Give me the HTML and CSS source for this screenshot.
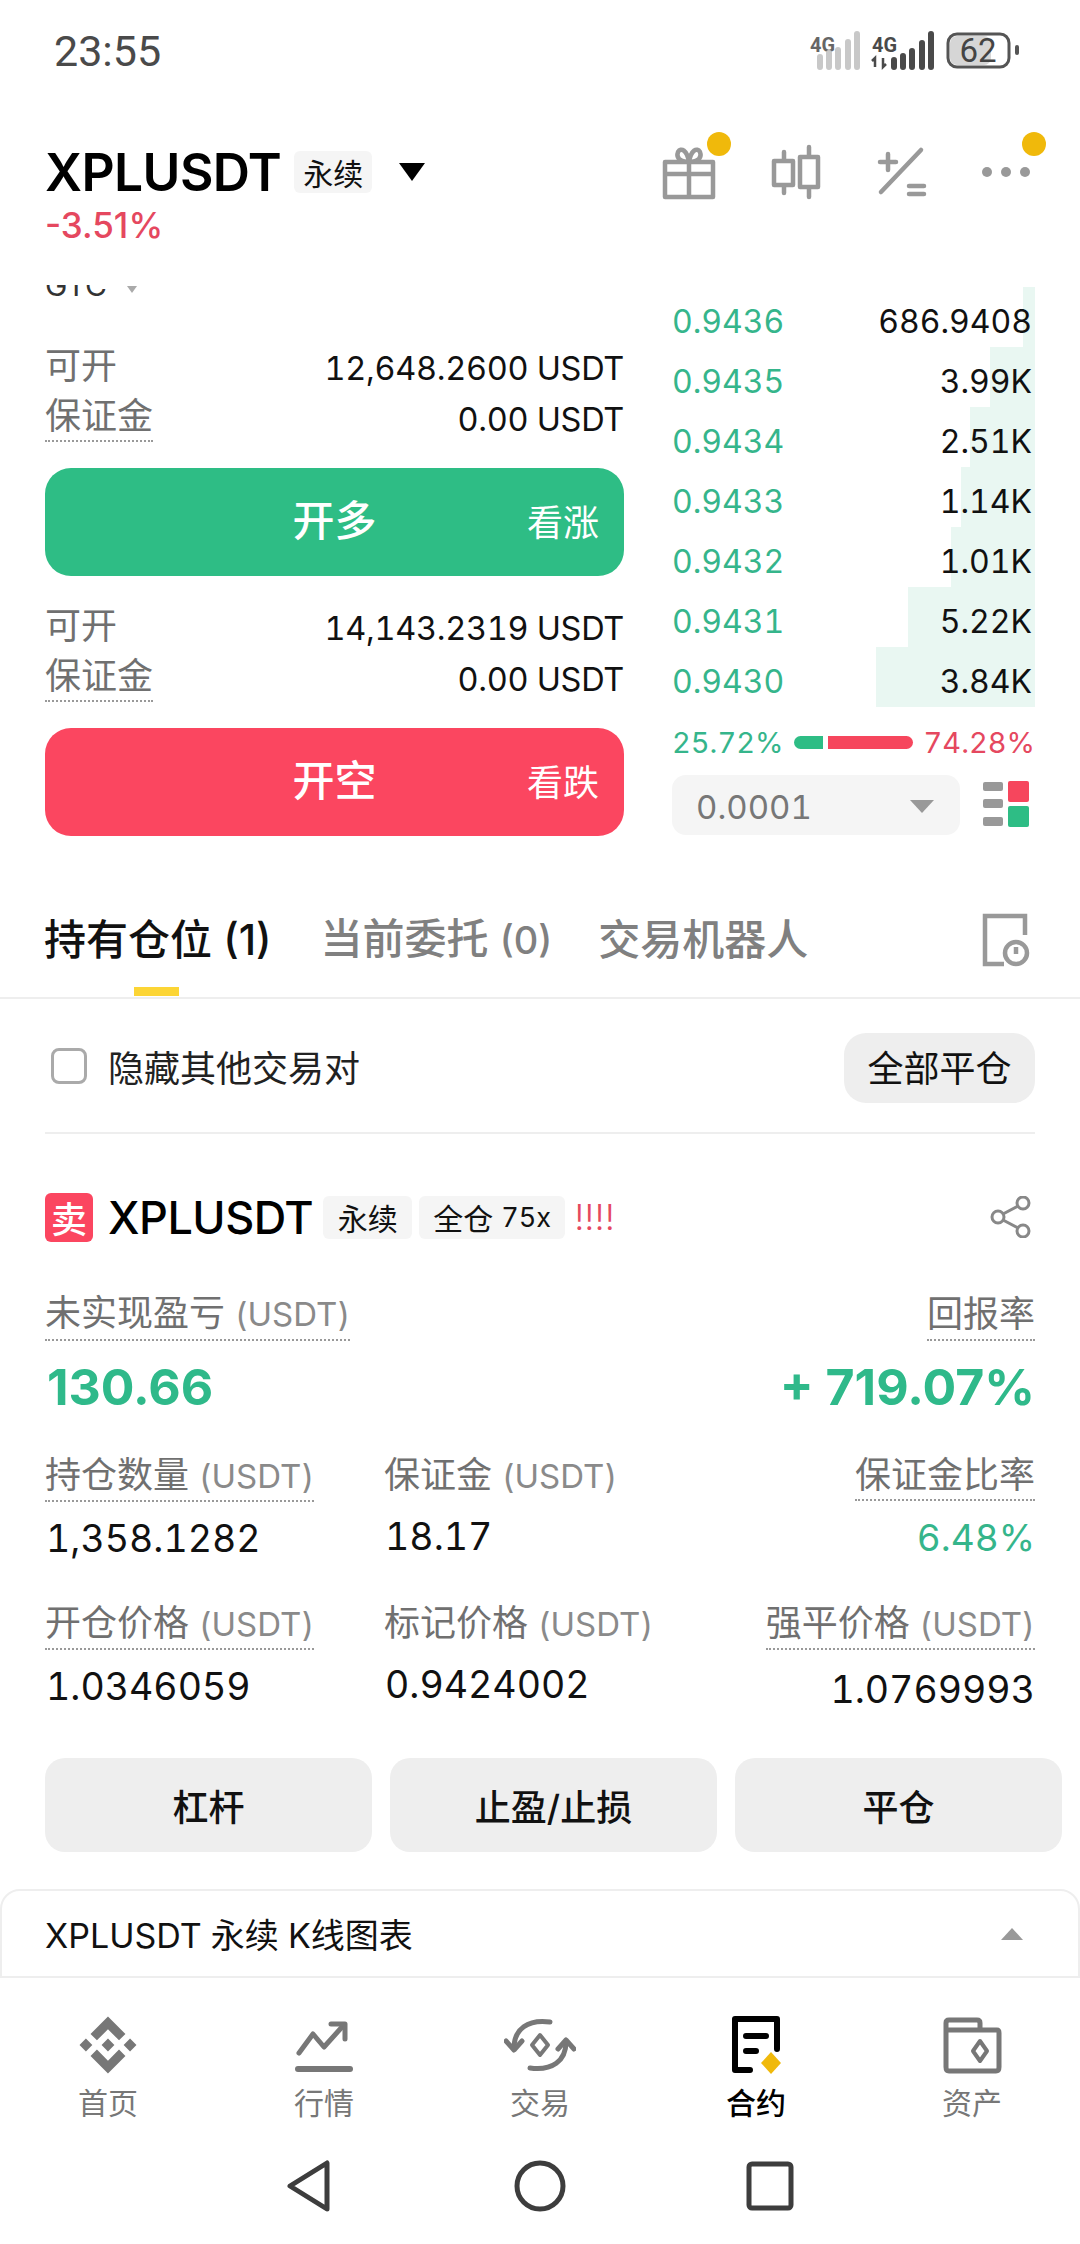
FILE: index.html
```html
<!DOCTYPE html>
<html lang="zh">
<head>
<meta charset="utf-8">
<title>XPLUSDT</title>
<link rel="stylesheet" href="styles.css">
</head>
<body>
<div class="page">
  <header class="status">
    <span class="time">23:55</span>
    <svg class="status-icons" width="214" height="42" viewBox="0 0 214 42">
      <text class="net" x="2" y="22" textLength="25" lengthAdjust="spacingAndGlyphs">4G</text>
      <g class="bars-off">
        <path d="M12 27V37M21 23V37M30 20V37M40 12V37M49 4V37"/>
      </g>
      <text class="net on" x="64" y="22" textLength="25" lengthAdjust="spacingAndGlyphs">4G</text>
      <path class="arrows" d="M67 37V28L64 31M75 28V37L78 34"/>
      <g class="bars-on">
        <path d="M86 30V37M95 26V37M104 21V37M114 13V37M123 4V37"/>
      </g>
      <rect class="bat-fill" x="142" y="6" width="41" height="29" rx="7"/>
      <rect class="bat" x="140" y="4" width="61" height="33" rx="9"/>
      <rect class="bat-nub" x="207" y="15" width="4" height="10" rx="2"/>
      <text class="bat-num" x="170" y="32">62</text>
    </svg>
  </header>

  <section class="pair">
    <div class="pair-row">
      <h1 class="pair-name">XPLUSDT</h1>
      <span class="tag tag-lg">永续</span>
      <svg class="caret" width="28" height="20" viewBox="0 0 28 20"><path d="M1 1H27L14 19Z"/></svg>
      <div class="actions">
        <span class="action gift">
          <svg width="60" height="60" viewBox="0 0 60 60"><path d="M6 20H54V55H6ZM6 32H54M30 20V55M30 20C20 20 17 15 19 10C22 5 28 8 30 20C32 8 38 5 41 10C43 15 40 20 30 20Z"/></svg>
          <i class="dot"></i>
        </span>
        <span class="action">
          <svg width="60" height="60" viewBox="0 0 60 60"><path d="M18 10V18M18 44V51M8 19H27V43H8ZM43 5V14M43 45V55M34 15H52V45H34Z"/></svg>
        </span>
        <span class="action">
          <svg width="60" height="60" viewBox="0 0 60 60"><path d="M50 8L10 50M9 20H25M17 12V28M38 44H53M38 52H53"/></svg>
        </span>
        <span class="action">
          <svg width="60" height="60" viewBox="0 0 60 60"><circle class="solid" cx="11" cy="30" r="5"/><circle class="solid" cx="30" cy="30" r="5"/><circle class="solid" cx="49" cy="30" r="5"/></svg>
          <i class="dot"></i>
        </span>
      </div>
    </div>
    <div class="change">-3.51%</div>
  </section>

  <section class="trade">
    <div class="order">
      <div class="gtc"><span class="gtc-text">GTC</span><i class="gtc-arrow"></i></div>
      <div class="info first">
        <div class="info-row"><span class="lbl">可开</span><span class="val">12,648.2600 USDT</span></div>
        <div class="info-row"><span class="lbl dotted">保证金</span><span class="val">0.00 USDT</span></div>
      </div>
      <button class="cta long"><span class="cta-main">开多</span><span class="cta-side">看涨</span></button>
      <div class="info second">
        <div class="info-row"><span class="lbl">可开</span><span class="val">14,143.2319 USDT</span></div>
        <div class="info-row"><span class="lbl dotted">保证金</span><span class="val">0.00 USDT</span></div>
      </div>
      <button class="cta short"><span class="cta-main">开空</span><span class="cta-side">看跌</span></button>
    </div>

    <div class="book">
      <div class="book-row"><i class="depth" style="width:12px"></i><span class="price">0.9436</span><span class="qty">686.9408</span></div>
      <div class="book-row"><i class="depth" style="width:45px"></i><span class="price">0.9435</span><span class="qty">3.99K</span></div>
      <div class="book-row"><i class="depth" style="width:65px"></i><span class="price">0.9434</span><span class="qty">2.51K</span></div>
      <div class="book-row"><i class="depth" style="width:74px"></i><span class="price">0.9433</span><span class="qty">1.14K</span></div>
      <div class="book-row"><i class="depth" style="width:84px"></i><span class="price">0.9432</span><span class="qty">1.01K</span></div>
      <div class="book-row"><i class="depth" style="width:127px"></i><span class="price">0.9431</span><span class="qty">5.22K</span></div>
      <div class="book-row"><i class="depth" style="width:159px"></i><span class="price">0.9430</span><span class="qty">3.84K</span></div>
      <div class="ratio">
        <span class="ratio-buy">25.72%</span>
        <span class="ratio-bar"><i class="rb-buy"></i><i class="rb-sell"></i></span>
        <span class="ratio-sell">74.28%</span>
      </div>
      <div class="book-foot">
        <div class="select"><span>0.0001</span><i class="select-arrow"></i></div>
        <svg class="layout" width="46" height="48" viewBox="0 0 46 48">
          <rect class="g" x="0" y="1" width="20" height="9" rx="2"/>
          <rect class="g" x="0" y="18" width="20" height="9" rx="2"/>
          <rect class="g" x="0" y="36" width="20" height="9" rx="2"/>
          <rect class="r" x="25" y="0" width="21" height="21" rx="2"/>
          <rect class="gr" x="25" y="25" width="21" height="21" rx="2"/>
        </svg>
      </div>
    </div>
  </section>

  <nav class="tabs">
    <span class="tab active">持有仓位 (1)<i class="tab-mark"></i></span>
    <span class="tab tab-open">当前委托 <small>(0)</small></span>
    <span class="tab">交易机器人</span>
    <svg class="tab-icon" width="48" height="54" viewBox="0 0 48 54">
      <path d="M22 51H3V3H43V22"/>
      <circle cx="34" cy="40" r="11"/>
      <path d="M34 34V41"/>
    </svg>
  </nav>

  <div class="filter">
    <div class="filter-in">
      <label class="check"><i class="box"></i><span>隐藏其他交易对</span></label>
      <button class="close-all">全部平仓</button>
    </div>
  </div>

  <section class="position">
    <div class="pos-head">
      <span class="side">卖</span>
      <span class="pos-name">XPLUSDT</span>
      <span class="tag">永续</span>
      <span class="tag tag-wide">全仓 <em>75x</em></span>
      <span class="warn">!!!!</span>
      <svg class="share" width="42" height="42" viewBox="0 0 42 42">
        <circle cx="8" cy="21" r="6"/><circle cx="33" cy="7" r="6"/><circle cx="33" cy="35" r="6"/>
        <path d="M13 18L28 10M13 24L28 32"/>
      </svg>
    </div>

    <div class="pnl-labels">
      <span class="lbl dotted">未实现盈亏 <small>(USDT)</small></span>
      <span class="lbl dotted">回报率</span>
    </div>
    <div class="pnl-vals">
      <span>130.66</span>
      <span>+ 719.07%</span>
    </div>

    <div class="stats">
      <div class="stat"><span class="lbl dotted">持仓数量 <small>(USDT)</small></span><span class="num">1,358.1282</span></div>
      <div class="stat"><span class="lbl">保证金 <small>(USDT)</small></span><span class="num">18.17</span></div>
      <div class="stat end"><span class="lbl dotted">保证金比率</span><span class="num up">6.48%</span></div>
      <div class="stat"><span class="lbl dotted">开仓价格 <small>(USDT)</small></span><span class="num">1.0346059</span></div>
      <div class="stat"><span class="lbl">标记价格 <small>(USDT)</small></span><span class="num">0.9424002</span></div>
      <div class="stat end"><span class="lbl dotted">强平价格 <small>(USDT)</small></span><span class="num low">1.0769993</span></div>
    </div>

    <div class="pos-btns">
      <button class="pos-btn">杠杆</button>
      <button class="pos-btn">止盈/止损</button>
      <button class="pos-btn">平仓</button>
    </div>
  </section>

  <section class="kpanel">
    <span>XPLUSDT 永续 K线图表</span>
    <i class="k-arrow"></i>
  </section>

  <nav class="bottom">
    <a class="nav-item">
      <svg width="72" height="60" viewBox="0 0 72 60"><g transform="translate(7.5 1.5) scale(1.78)"><path class="fill" d="M9.8 13.4L16 7.2L22.2 13.4L25.8 9.8L16 0L6.2 9.8ZM0 16L3.6 12.4L7.2 16L3.6 19.6ZM9.8 18.6L16 24.8L22.2 18.6L25.8 22.2L16 32L6.2 22.2ZM24.8 16L28.4 12.4L32 16L28.4 19.6ZM19.6 16L16 12.4L12.4 16L16 19.6Z"/></g></svg>
      <span>首页</span>
    </a>
    <a class="nav-item">
      <svg width="72" height="60" viewBox="0 0 72 60"><path d="M11 38L25 19L36 32L54 12"/><path d="M43 9H57V24" /><path class="thick" d="M10 54H62"/></svg>
      <span>行情</span>
    </a>
    <a class="nav-item">
      <svg width="72" height="60" viewBox="0 0 72 60"><path d="M10 33C10 14 24 4 46 7M62 27C62 46 48 56 26 53"/><path d="M2 26L10 35L18 26M54 34L62 25L70 34"/><path class="thin" d="M36 20L44 30L36 40L28 30Z"/></svg>
      <span>交易</span>
    </a>
    <a class="nav-item active">
      <svg width="72" height="60" viewBox="0 0 72 60"><path class="thick2" d="M57 34V4H15V55H30"/><path class="thick2" d="M26 21H46M26 36H36"/><path class="gold" d="M51 37L61 48L51 59L41 48Z"/></svg>
      <span>合约</span>
    </a>
    <a class="nav-item">
      <svg width="72" height="60" viewBox="0 0 72 60"><path d="M10 20V8C10 6 11 5 13 5H41C43 5 44 6 44 8V15H61C62 15 63 16 63 18V52C63 55 62 56 60 56H13C11 56 10 55 10 52V15H44"/><path class="thin" d="M44 26L51 36L44 46L37 36Z"/></svg>
      <span>资产</span>
    </a>
  </nav>

  <div class="android">
    <svg width="46" height="52" viewBox="0 0 46 52"><path d="M41 3V49L4 26Z"/></svg>
    <svg width="52" height="52" viewBox="0 0 52 52"><circle cx="26" cy="26" r="23"/></svg>
    <svg width="48" height="52" viewBox="0 0 48 52"><rect x="3" y="4" width="42" height="44" rx="3"/></svg>
  </div>
</div>
</body>
</html>
```
FILE: styles.css
```css
* { box-sizing: border-box; }
html, body { margin: 0; padding: 0; background: #fff; }
body { font-family: Inter, "Noto Sans CJK SC", sans-serif; color: #000; font-variant-numeric: tabular-nums; }
.page { width: 1080px; height: 2244px; overflow: hidden; position: relative; }
i, em { font-style: normal; }
button { font-family: inherit; font-variant-numeric: inherit; border: 0; padding: 0; }
svg { display: block; }

/* status */
.status { height: 110px; display: flex; justify-content: space-between; padding: 30px 58px 0 54px; align-items: flex-start; }
.time { font: 400 43px/42px Roboto, sans-serif; color: #4a4a4a; }
.net { font: 700 21px Roboto, sans-serif; fill: #666; }
.net.on { fill: #4a4a4a; }
.bars-off path { stroke: #c8c8c8; stroke-width: 6; stroke-linecap: round; fill: none; }
.bars-on path { stroke: #4a4a4a; stroke-width: 6; stroke-linecap: round; fill: none; }
.arrows { stroke: #4a4a4a; stroke-width: 2.5; fill: none; }
.bat { fill: none; stroke: #555; stroke-width: 3; }
.bat-fill { fill: #d6d6d6; }
.bat-nub { fill: #555; }
.bat-num { font: 400 33px Roboto, sans-serif; fill: #444; text-anchor: middle; }

/* pair */
.pair { height: 175px; padding: 26px 0 0 45px; }
.pair-row { height: 72px; display: flex; align-items: center; }
.pair-name { margin: 0; font: 600 51.5px/72px Inter, sans-serif; letter-spacing: -0.6px; }
.tag { display: inline-flex; align-items: center; justify-content: center; height: 43px; width: 89px; margin-left: 10px; background: #f5f5f5; border-radius: 6px; font-size: 30px; color: #111; }
.tag-lg { width: 78px; height: 42px; margin-left: 13px; }
.tag-wide { width: 146px; margin-left: 7px; }
.tag-wide em { font-size: 27px; margin-left: 8px; }
.caret { margin-left: 26px; }
.caret path { fill: #000; }
.actions { margin-left: auto; margin-right: 22px; display: flex; }
.action { position: relative; width: 105px; display: flex; justify-content: center; }
.gift svg { margin-right: 4px; }
.action svg path { fill: none; stroke: #999; stroke-width: 4.5; stroke-linecap: round; stroke-linejoin: round; }
.action .solid { fill: #999; }
.dot { position: absolute; left: 69px; top: -10px; width: 24px; height: 24px; border-radius: 50%; background: #f0b90b; }
.change { font: 500 35px/35px Inter, sans-serif; color: #e5485f; }

/* trade */
.trade { height: 597px; padding: 0 45px; display: grid; grid-template-columns: 579px 363px; column-gap: 48px; }
.gtc { height: 15px; overflow: hidden; display: flex; align-items: flex-end; color: #333; }
.gtc-text { font-size: 30px; line-height: 30px; }
.gtc-arrow { width: 0; height: 0; margin: 0 0 7px 20px; border: 5px solid transparent; border-top: 7px solid #aaa; border-bottom: 0; }
.info.first { margin-top: 40px; }
.info.second { margin-top: 24px; }
.info-row { height: 51px; display: flex; justify-content: space-between; align-items: center; }
.lbl { font-size: 36px; line-height: 48px; color: #707070; }
.lbl small { font-size: 33px; color: #8a8a8a; }
.dotted { border-bottom: 2px dotted #999; }
.val { font-size: 32.5px; color: #111; letter-spacing: -0.3px; padding-top: 5px; }
.cta { width: 579px; height: 108px; margin-top: 26px; border-radius: 26px; color: #fff; position: relative; display: flex; align-items: center; justify-content: center; padding-bottom: 10px; }
.long { background: #2ebd85; }
.short { background: #fb4660; }
.cta-main { font-size: 42px; font-weight: 500; }
.cta-side { position: absolute; right: 25px; top: 26px; font-size: 36px; }

/* book */
.book { padding-top: 2px; }
.book-row { position: relative; height: 60px; display: flex; justify-content: space-between; align-items: center; font-size: 32px; padding: 8px 3px 0 0; }
.depth { position: absolute; right: 0; top: 0; bottom: 0; background: #e9f7f2; }
.price { position: relative; color: #35b58b; }
.qty { position: relative; color: #111; }
.ratio { margin-top: 17px; height: 36px; display: flex; align-items: center; justify-content: space-between; font-size: 29px; }
.ratio-buy { color: #35b58b; }
.ratio-sell { color: #e5485f; }
.ratio-bar { width: 119px; display: flex; gap: 5px; height: 13px; }
.rb-buy { width: 29px; background: #2ebd85; border-radius: 7px 0 0 7px; }
.rb-sell { flex: 1; background: #f6465d; border-radius: 0 7px 7px 0; }
.book-foot { margin-top: 15px; display: flex; align-items: center; justify-content: space-between; }
.select { width: 288px; height: 60px; background: #f5f5f5; border-radius: 14px; display: flex; align-items: center; justify-content: space-between; padding: 3px 26px 0 24px; font-size: 33px; color: #777; }
.select-arrow { width: 0; height: 0; border: 12px solid transparent; border-top: 13px solid #999; border-bottom: 0; }
.layout { margin-right: 6px; }
.layout .g { fill: #999; }
.layout .r { fill: #f6465d; }
.layout .gr { fill: #2ebd85; }

/* tabs */
.tabs { position: relative; height: 117px; padding: 0 50px 0 44px; border-bottom: 2px solid #eee; display: flex; align-items: center; font-variant-numeric: normal; }
.tab { position: relative; font-size: 42px; font-weight: 500; color: #808080; margin-right: 49px; line-height: 60px; }
.tab small { font-size: 38px; }
.tab.active { color: #111; }
.tab-open { margin-right: 46px; }
.tab-mark { position: absolute; left: 90px; top: 77px; width: 45px; height: 9px; background: #fcd535; }
.tab-icon { margin-left: auto; }
.tab-icon path, .tab-icon circle { fill: none; stroke: #999; stroke-width: 4.5; }

/* filter */
.filter { padding: 0 45px; height: 135px; }
.filter-in { height: 135px; display: flex; justify-content: space-between; align-items: center; border-bottom: 2px solid #eee; }
.check { display: flex; align-items: center; font-size: 36px; color: #222; }
.box { width: 36px; height: 36px; margin: 0 21px 0 6px; border: 3px solid #aaa; border-radius: 8px; }
.close-all { width: 191px; height: 70px; margin-top: 4px; padding-bottom: 4px; background: #eee; border-radius: 22px; font-size: 36px; color: #111; }

/* position */
.position { padding: 58px 45px 0; }
.pos-head { height: 50px; display: flex; align-items: center; }
.side { width: 48px; height: 49px; background: #fb4660; border-radius: 6px; color: #fff; font-size: 36px; font-weight: 500; display: flex; align-items: center; justify-content: center; }
.pos-name { margin-left: 15px; font-size: 45px; font-weight: 500; letter-spacing: -0.5px; }
.warn { margin-left: 9px; color: #e5485f; font-size: 36px; font-weight: 300; }
.share { margin-left: auto; margin-right: 3px; }
.share circle, .share path { fill: none; stroke: #888; stroke-width: 3; }
.pnl-labels { margin-top: 47px; display: flex; justify-content: space-between; align-items: flex-end; }
.pnl-labels .lbl { line-height: 49px; }
.pnl-vals { margin-top: 16px; height: 60px; display: flex; justify-content: space-between; align-items: center; font: 700 50px/60px Inter, sans-serif; color: #2fb98a; padding-left: 2px; }
.stats { margin-top: 34px; display: grid; grid-template-columns: 339px 1fr auto; row-gap: 35px; }
.stat { display: flex; flex-direction: column; align-items: flex-start; }
.stat.end { align-items: flex-end; }
.stat .lbl { line-height: 48px; }
.num { margin-top: 12px; height: 50px; font-size: 37.5px; line-height: 50px; color: #111; padding-left: 1px; }
.num.up { color: #35b58b; font-size: 37px; }
.num.low { margin-top: 15px; height: 47px; }
.pos-btns { margin-top: 46px; display: grid; grid-template-columns: 327px 327px 327px; column-gap: 18px; }
.pos-btn { height: 94px; background: #eee; border-radius: 20px; font-size: 36px; font-weight: 500; color: #111; }

/* K panel */
.kpanel { margin-top: 37px; height: 89px; border: 2px solid #eee; border-radius: 20px 20px 0 0; display: flex; align-items: center; justify-content: space-between; padding: 0 55px 0 43px; font-size: 34px; color: #111; }
.k-arrow { width: 0; height: 0; border: 11px solid transparent; border-bottom: 12px solid #999; border-top: 0; }

/* nav */
.bottom { height: 150px; padding-top: 37px; display: grid; grid-template-columns: repeat(5, 216px); }
.nav-item { display: flex; flex-direction: column; align-items: center; font-size: 30px; color: #777; }
.nav-item span { margin-top: 9px; line-height: 38px; }
.nav-item.active { color: #000; font-weight: 500; }
.nav-item svg path { fill: none; stroke: #777; stroke-width: 5; stroke-linejoin: round; stroke-linecap: round; }
.nav-item svg path.fill { fill: #777; stroke: none; }
.nav-item svg path.thick { stroke-width: 6; }
.nav-item svg path.thin { stroke-width: 4; }
.nav-item svg path.thick2 { stroke: #000; stroke-width: 6; }
.nav-item svg path.gold { fill: #f0b90b; stroke: none; }

/* android */
.android { padding: 32px 0 0 286px; display: flex; align-items: center; }
.android svg:nth-child(1) { margin-right: 182px; }
.android svg:nth-child(2) { margin-right: 180px; }
.android path, .android circle, .android rect { fill: none; stroke: #3d3d3d; stroke-width: 5; stroke-linejoin: round; }
```
